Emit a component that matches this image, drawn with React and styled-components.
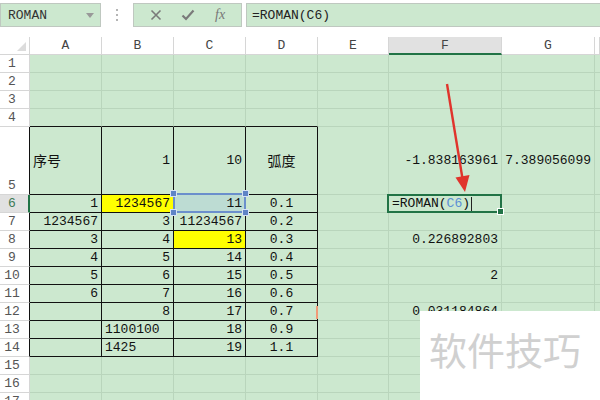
import React from 'react';
import styled, { createGlobalStyle, css } from 'styled-components';

const GlobalStyle = createGlobalStyle`
  html, body {
    margin: 0;
    padding: 0;
    background: #ffffff;
  }
`;

const GREEN = '#cce8cf';
const GRID = '#b9d5bc';
const DARK_GREEN = '#217346';
const MONO = '"Liberation Mono", "Noto Sans CJK SC", monospace';
const CJK = '"Noto Sans CJK SC", sans-serif';

const COLS = '30px 72px 72px 72px 72px 71px 113px 93px 1fr';
const LETTERS = ['A', 'B', 'C', 'D', 'E', 'F', 'G', 'H'];

const Page = styled.div`
  position: relative;
  width: 600px;
  height: 400px;
  overflow: hidden;
  background: #fff;
  font-family: ${MONO};
`;

const TopBar = styled.div`
  height: 37px;
  display: flex;
  align-items: flex-start;
  padding-top: 3px;
  box-sizing: border-box;
`;

const Box = styled.div`
  height: 24px;
  box-sizing: border-box;
  background: ${GREEN};
  border: 1px solid #bfc8c0;
  display: flex;
  align-items: center;
`;

const NameBox = styled(Box)`
  width: 101px;
  padding-left: 7px;
  font-size: 13px;
  color: #333;
  justify-content: space-between;
`;

const DropArrow = styled.span`
  width: 0;
  height: 0;
  margin-right: 6px;
  border-left: 4px solid transparent;
  border-right: 4px solid transparent;
  border-top: 5px solid #999;
`;

const Separator = styled.div`
  width: 32px;
  height: 24px;
  display: flex;
  flex-direction: column;
  align-items: center;
  justify-content: center;
  gap: 3px;
`;

const Dot = styled.span`
  width: 2px;
  height: 2px;
  background: #b5b5b5;
`;

const ButtonBox = styled(Box)`
  width: 109px;
  justify-content: space-around;
  padding: 0 6px;
`;

const Fx = styled.span`
  font-family: "Liberation Serif", serif;
  font-style: italic;
  font-size: 14px;
  color: #777;
`;

const FormulaBox = styled(Box)`
  flex: 1;
  margin-left: 4px;
  margin-right: -2px;
  padding-left: 5px;
  font-size: 13px;
  color: #222;
`;

const Row = styled.div`
  display: grid;
  grid-template-columns: ${COLS};
  height: ${(p) => p.$h}px;
`;

const HeadCell = styled.div`
  box-sizing: border-box;
  background: ${(p) => (p.$active ? '#e1e1e1' : '#fff')};
  border-right: 1px solid #d6d6d6;
  border-bottom: ${(p) => (p.$active ? `2px solid ${DARK_GREEN}` : '1px solid #d6d6d6')};
  display: flex;
  align-items: center;
  justify-content: center;
  font-size: 13px;
  color: #444;
  position: relative;
  overflow: hidden;
`;

const Corner = styled.span`
  position: absolute;
  right: 3px;
  bottom: 3px;
  width: 0;
  height: 0;
  border-left: 9px solid transparent;
  border-bottom: 9px solid #dcdcdc;
`;

const RowLabel = styled.div`
  box-sizing: border-box;
  background: ${(p) => (p.$active ? '#e1e1e1' : '#fff')};
  border-bottom: 1px solid #d6d6d6;
  border-right: ${(p) =>
    p.$active ? `2px solid ${DARK_GREEN}` : p.$table ? '1px solid #111' : '1px solid #d6d6d6'};
  display: flex;
  align-items: flex-end;
  justify-content: center;
  padding-right: ${(p) => (p.$active ? 4 : 5)}px;
  font-size: 13px;
  line-height: 17px;
  color: ${(p) => (p.$active ? '#3d7a55' : '#555')};
`;

const Cell = styled.div`
  position: relative;
  box-sizing: border-box;
  background: ${(p) => p.$bg || GREEN};
  border-right: 1px solid ${(p) => (p.$table ? '#111' : GRID)};
  border-bottom: 1px solid ${(p) => (p.$table || p.$tableTop ? '#111' : GRID)};
  display: flex;
  align-items: center;
  justify-content: ${(p) =>
    p.$align === 'left' ? 'flex-start' : p.$align === 'center' ? 'center' : 'flex-end'};
  padding: 0 3px;
  font-size: 13px;
  line-height: 17px;
  color: #111;
  white-space: nowrap;
  ${(p) =>
    p.$selected &&
    css`
      &::after {
        content: '';
        position: absolute;
        left: -2px;
        top: -1px;
        right: -1px;
        bottom: -1px;
        border: 2px solid ${DARK_GREEN};
        pointer-events: none;
      }
    `}
  ${(p) =>
    p.$ref &&
    css`
      &::after {
        content: '';
        position: absolute;
        left: -1px;
        top: -2px;
        right: -1px;
        bottom: -1px;
        border: 2px solid #6b8fcc;
        pointer-events: none;
      }
    `}
`;

const Cjk = styled.span`
  font-family: ${CJK};
  font-size: 14px;
`;

const RefHandle = styled.span`
  position: absolute;
  width: 5px;
  height: 5px;
  background: #5f84c6;
  border: 1px solid #d7e3f3;
  z-index: 2;
  ${(p) => (p.$v === 'top' ? 'top: -5px;' : 'bottom: -4px;')}
  ${(p) => (p.$h === 'left' ? 'left: -4px;' : 'right: -4px;')}
`;

const FillHandle = styled.span`
  position: absolute;
  right: -3px;
  bottom: -3px;
  width: 5px;
  height: 5px;
  background: ${DARK_GREEN};
  border: 1px solid #fff;
  z-index: 2;
`;

const RefText = styled.span`
  color: #5b8fd6;
`;

const Caret = styled.span`
  display: inline-block;
  width: 1px;
  height: 14px;
  background: #222;
  margin-left: 1px;
`;

const RedMark = styled.span`
  position: absolute;
  right: -1px;
  top: 3px;
  width: 2px;
  height: 13px;
  background: #f19a77;
`;

const ArrowLayer = styled.svg`
  position: absolute;
  left: 0;
  top: 0;
  pointer-events: none;
`;

const Watermark = styled.div`
  position: absolute;
  left: 420px;
  top: 311px;
  right: 0;
  bottom: 0;
  background: #fff;
  padding: 19px 0 0 9px;
  box-sizing: border-box;
  font-family: ${CJK};
  font-size: 38px;
  line-height: 1;
  color: #d0d0d0;
  white-space: nowrap;
`;

const formula = (
  <>
    =ROMAN(<RefText>C6</RefText>)<Caret />
  </>
);

const ROWS = [
  { n: 1 },
  { n: 2 },
  { n: 3 },
  { n: 4, tableTop: true },
  {
    n: 5,
    h: 68,
    cells: {
      A: { t: <Cjk>序号</Cjk>, align: 'left' },
      B: { t: '1' },
      C: { t: '10' },
      D: { t: <Cjk>弧度</Cjk>, align: 'center' },
      F: { t: '-1.838163961' },
      G: { t: '7.389056099' },
    },
  },
  {
    n: 6,
    active: true,
    cells: {
      A: { t: '1' },
      B: { t: '1234567', bg: '#ffff00' },
      C: { t: '11', ref: true, bg: '#bddcd3' },
      D: { t: '0.1', align: 'center' },
      F: { t: formula, align: 'left', selected: true },
    },
  },
  { n: 7, cells: { A: { t: '1234567' }, B: { t: '3' }, C: { t: '11234567' }, D: { t: '0.2', align: 'center' } } },
  {
    n: 8,
    cells: {
      A: { t: '3' },
      B: { t: '4' },
      C: { t: '13', bg: '#ffff00' },
      D: { t: '0.3', align: 'center' },
      F: { t: '0.226892803' },
    },
  },
  { n: 9, cells: { A: { t: '4' }, B: { t: '5' }, C: { t: '14' }, D: { t: '0.4', align: 'center' } } },
  {
    n: 10,
    cells: { A: { t: '5' }, B: { t: '6' }, C: { t: '15' }, D: { t: '0.5', align: 'center' }, F: { t: '2' } },
  },
  { n: 11, cells: { A: { t: '6' }, B: { t: '7' }, C: { t: '16' }, D: { t: '0.6', align: 'center' } } },
  {
    n: 12,
    cells: {
      B: { t: '8' },
      C: { t: '17' },
      D: { t: '0.7', align: 'center', mark: true },
      F: { t: '0.031184864' },
    },
  },
  { n: 13, cells: { B: { t: '1100100', align: 'left' }, C: { t: '18' }, D: { t: '0.9', align: 'center' } } },
  { n: 14, cells: { B: { t: '1425', align: 'left' }, C: { t: '19' }, D: { t: '1.1', align: 'center' } } },
  { n: 15 },
  { n: 16 },
  { n: 17 },
];

const inTable = (n, col) => n >= 5 && n <= 14 && ['A', 'B', 'C', 'D'].includes(col);

const CheckIcon = () => (
  <svg width="14" height="12" viewBox="0 0 14 12">
    <path d="M1.5 6.5 L5 10 L12.5 1.5" fill="none" stroke="#7a7a7a" strokeWidth="2.2" />
  </svg>
);

const CrossIcon = () => (
  <svg width="12" height="12" viewBox="0 0 12 12">
    <path d="M1.5 1.5 L10.5 10.5 M10.5 1.5 L1.5 10.5" stroke="#7a7a7a" strokeWidth="1.6" />
  </svg>
);

const App = () => {
  return (
    <Page>
      <GlobalStyle />
      <TopBar>
        <NameBox>
          ROMAN
          <DropArrow />
        </NameBox>
        <Separator>
          <Dot />
          <Dot />
          <Dot />
        </Separator>
        <ButtonBox>
          <CrossIcon />
          <CheckIcon />
          <Fx>fx</Fx>
        </ButtonBox>
        <FormulaBox>=ROMAN(C6)</FormulaBox>
      </TopBar>

      <Row $h={18}>
        <HeadCell>
          <Corner />
        </HeadCell>
        {LETTERS.map((l) => (
          <HeadCell key={l} $active={l === 'F'}>
            {l === 'H' ? null : l}
          </HeadCell>
        ))}
      </Row>

      {ROWS.map((row) => (
        <Row key={row.n} $h={row.h || 18}>
          <RowLabel $active={row.active} $table={row.n >= 5 && row.n <= 14}>
            {row.n}
          </RowLabel>
          {LETTERS.map((l) => {
            const c = (row.cells && row.cells[l]) || {};
            return (
              <Cell
                key={l}
                $table={inTable(row.n, l)}
                $tableTop={row.tableTop && ['A', 'B', 'C', 'D'].includes(l)}
                $align={c.align}
                $bg={c.bg}
                $selected={c.selected}
                $ref={c.ref}
              >
                {c.t}
                {c.ref && (
                  <>
                    <RefHandle $v="top" $h="left" />
                    <RefHandle $v="top" $h="right" />
                    <RefHandle $v="bottom" $h="left" />
                    <RefHandle $v="bottom" $h="right" />
                  </>
                )}
                {c.selected && <FillHandle />}
                {c.mark && <RedMark />}
              </Cell>
            );
          })}
        </Row>
      ))}

      <ArrowLayer width="600" height="400" viewBox="0 0 600 400">
        <line x1="447" y1="84" x2="462.4" y2="178" stroke="#e0342c" strokeWidth="2.4" />
        <polygon points="465,192 469.5,175 455.5,177.4" fill="#e0342c" />
      </ArrowLayer>

      <Watermark>软件技巧</Watermark>
    </Page>
  );
};

export default App;
